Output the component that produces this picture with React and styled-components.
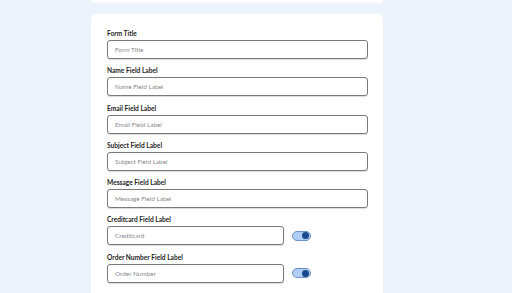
import React from "react";
import styled, { createGlobalStyle } from "styled-components";

const Global = createGlobalStyle`
  html, body { margin: 0; padding: 0; background: #edf3fd; }
  body { font-family: Lato, "Open Sans", sans-serif; }
`;

const Page = styled.div`
  display: flex;
  flex-direction: column;
  gap: 11px;
  padding-left: 91px;
  width: 292px;
`;

const TopCard = styled.div`
  height: 3px;
  background: #fff;
  border-radius: 0 0 4px 4px;
`;

const Card = styled.div`
  background: #fff;
  border-radius: 5px;
  padding: 15px 15px 20px 16px;
  display: flex;
  flex-direction: column;
  gap: 7.3px;
`;

const Field = styled.div`
  display: flex;
  flex-direction: column;
  gap: 3px;
`;

const Label = styled.label`
  font-size: 6.6px;
  font-weight: 700;
  color: #1c1c1c;
  line-height: 8px;
  height: 8px;
`;

const Row = styled.div`
  display: flex;
  align-items: center;
  gap: 8px;
`;

const Input = styled.input`
  box-sizing: border-box;
  width: ${(p) => (p.$short ? "177px" : "261px")};
  height: 19px;
  border: 1px solid #7a7a7a;
  border-radius: 3px;
  padding: 0 7px;
  font-family: Lato, "Open Sans", sans-serif;
  font-size: 6.4px;
  color: #333;
  background: #fff;
  box-shadow: 0 1px 1px rgba(0, 0, 0, 0.15);
  outline: none;
  &::placeholder { color: #8a8a8a; }
`;

const Toggle = styled.div`
  box-sizing: border-box;
  width: 19px;
  height: 10px;
  border-radius: 5px;
  background: #b0cdf5;
  border: 1px solid #6b8fc4;
  display: flex;
  align-items: center;
  justify-content: flex-end;
  padding-right: 1px;
`;

const Knob = styled.div`
  width: 7px;
  height: 7px;
  border-radius: 50%;
  background: #174a8c;
`;

const fields = [
  ["Form Title", "Form Title"],
  ["Name Field Label", "Name Field Label"],
  ["Email Field Label", "Email Field Label"],
  ["Subject Field Label", "Subject Field Label"],
  ["Message Field Label", "Message Field Label"],
];

const toggles = [
  ["Creditcard Field Label", "Creditcard"],
  ["Order Number Field Label", "Order Number"],
];

export default function App() {
  return (
    <>
      <Global />
      <Page>
        <TopCard />
        <Card>
          {fields.map(([l, p]) => (
            <Field key={l}>
              <Label>{l}</Label>
              <Input placeholder={p} />
            </Field>
          ))}
          {toggles.map(([l, p]) => (
            <Field key={l}>
              <Label>{l}</Label>
              <Row>
                <Input $short placeholder={p} />
                <Toggle>
                  <Knob />
                </Toggle>
              </Row>
            </Field>
          ))}
        </Card>
      </Page>
    </>
  );
}
